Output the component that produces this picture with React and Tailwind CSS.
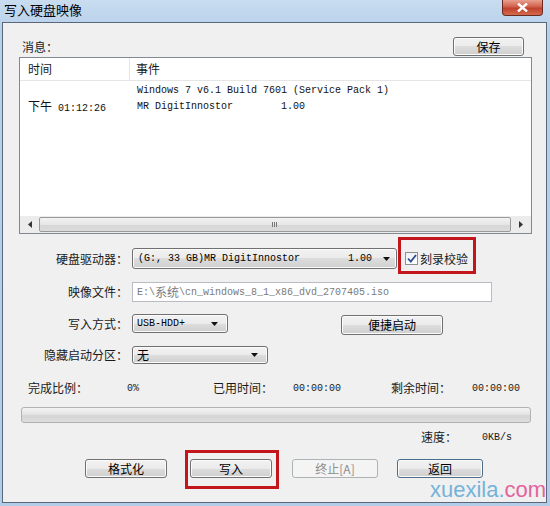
const CJK = "font-['Noto_Sans_CJK_SC',sans-serif]";
const MONO = "font-['Liberation_Mono','Noto_Sans_CJK_SC',monospace]";
const FACE =
  "flex items-center rounded-[3px] bg-[linear-gradient(#f2f2f2,#ebebeb_50%,#dddddd_50%,#cfcfcf)] shadow-[inset_0_0_0_1px_#fbfbfb] text-[12px] text-black";
const BTN = `${FACE} justify-center border border-[#707070]`;
const COMBO = `${FACE} justify-between border border-[#707070]`;

function Arrow() {
  return (
    <svg width="7" height="4" viewBox="0 0 7 4">
      <path d="M0 0h7L3.5 4z" fill="#111" />
    </svg>
  );
}

function Label({ children }) {
  return (
    <div className={`w-[125px] shrink-0 text-right text-[12px] text-[#1a1a1a] ${CJK}`}>
      {children}
    </div>
  );
}

export default function App() {
  return (
    <div className="relative w-[550px] h-[506px] overflow-hidden bg-[linear-gradient(#c9dcf0,#b7d0ea_30px,#b3cde9)]">
      {/* title bar */}
      <div className="flex items-start h-[22px]">
        <div className={`pl-[4px] pt-[1px] text-[13px] leading-[18px] text-black ${CJK}`}>写入硬盘映像</div>
        <div className="ml-auto mr-[7px] w-[41px] h-[16px] rounded-b-[4px] border border-t-0 border-[#6b2a22] bg-[linear-gradient(#e9a08f,#d0604b_45%,#c0402c_55%,#d46a4a)] flex items-center justify-center">
          <svg width="11" height="9" viewBox="0 0 11 9">
            <path d="M1 0.5L10 8.5M10 0.5L1 8.5" stroke="#fff" strokeWidth="2.4" />
          </svg>
        </div>
      </div>

      {/* client area */}
      <div className="ml-[2px] w-[545px] h-[481px] border border-[#58677a] bg-[#f0f0f0] flex flex-col">
        {/* messages header */}
        <div className="mt-[14px] h-[19px] flex items-center pl-[19px] pr-[22px]">
          <span className={`text-[12px] text-[#1a1a1a] ${CJK}`}>消息：</span>
          <button className={`${BTN} ml-auto w-[71px] h-[19px] ${CJK}`}>保存</button>
        </div>

        {/* list view */}
        <div className="mt-[1px] ml-[16px] w-[513px] h-[177px] border border-[#828790] bg-white flex flex-col">
          <div className={`h-[23px] shrink-0 flex items-center border-b border-[#e5e5e5] text-[12px] text-[#1a1a1a] ${CJK}`}>
            <div className="w-[110px] pl-[8px] border-r border-[#e5e5e5] h-full flex items-center">时间</div>
            <div className="pl-[6px]">事件</div>
          </div>
          <div className="pt-[1px] flex flex-col text-[10px] text-[#111]">
            <div className="h-[16px] flex items-center">
              <div className="w-[111px]" />
              <div className={`pl-[6px] whitespace-pre ${MONO}`}>Windows 7 v6.1 Build 7601 (Service Pack 1)</div>
            </div>
            <div className="h-[16px] flex items-center">
              <div className={`w-[111px] pl-[8px] whitespace-pre ${MONO}`}>
                <span className={`text-[12px] ${CJK}`}>下午</span> 01:12:26
              </div>
              <div className={`pl-[6px] whitespace-pre ${MONO}`}>MR DigitInnostor        1.00</div>
            </div>
          </div>
          <div className="mt-auto h-[17px] flex items-center bg-[#ececec] px-[1px]">
            <div className="w-[18px] h-[15px] flex items-center justify-center">
              <svg width="4" height="7" viewBox="0 0 4 7"><path d="M4 0v7L0 3.5z" fill="#333" /></svg>
            </div>
            <div className="flex-1 h-[15px] rounded-[2px] border border-[#9a9a9a] bg-[linear-gradient(#f3f3f3,#e6e6e6_50%,#d6d6d6_50%,#dcdcdc)] flex items-center justify-center">
              <svg width="6" height="7" viewBox="0 0 6 7"><path d="M0.5 1v5M2.5 1v5M4.5 1v5" stroke="#777" /></svg>
            </div>
            <div className="w-[19px] h-[15px] flex items-center justify-center">
              <svg width="4" height="7" viewBox="0 0 4 7"><path d="M0 0v7L4 3.5z" fill="#333" /></svg>
            </div>
          </div>
        </div>

        {/* drive */}
        <div className="mt-[14px] h-[21px] flex items-center">
          <Label>硬盘驱动器：</Label>
          <div className={`${COMBO} ml-[4px] w-[265px] h-[21px] pl-[5px] pr-[6px]`}>
            <span className={`text-[10px] whitespace-pre ${MONO}`}>(G:, 33 GB)MR DigitInnostor        1.00</span>
            <Arrow />
          </div>
          <div className="ml-[8px] flex items-center">
            <div className="w-[13px] h-[13px] border border-[#8e8f8f] bg-[linear-gradient(#eef1f5,#ffffff)] flex items-center justify-center">
              <svg width="10" height="9" viewBox="0 0 10 9">
                <path d="M1 4.5L3.8 7.5L9 1" stroke="#2c4d8f" strokeWidth="1.8" fill="none" />
              </svg>
            </div>
            <span className={`ml-[2px] text-[12px] text-[#1a1a1a] ${CJK}`}>刻录校验</span>
          </div>
        </div>

        {/* image file */}
        <div className="mt-[13px] h-[20px] flex items-center">
          <Label>映像文件：</Label>
          <div className={`ml-[4px] w-[360px] h-[20px] border border-[#b9bcc2] bg-white flex items-center pl-[4px] text-[10px] text-[#7a7a7a] whitespace-pre ${MONO}`}>
            E:\<span className={`text-[12px] ${CJK}`}>系统</span>\cn_windows_8_1_x86_dvd_2707405.iso
          </div>
        </div>

        {/* write mode */}
        <div className="mt-[12px] h-[21px] flex items-start">
          <div className="h-[19px] flex items-center">
            <Label>写入方式：</Label>
          </div>
          <div className={`${COMBO} ml-[4px] w-[96px] h-[19px] pl-[4px] pr-[9px]`}>
            <span className={`text-[10px] ${MONO}`}>USB-HDD+</span>
            <Arrow />
          </div>
          <button className={`${BTN} ml-[113px] mt-[1px] w-[102px] h-[20px] ${CJK}`}>便捷启动</button>
        </div>

        {/* hidden partition */}
        <div className="mt-[11px] h-[18px] flex items-center">
          <Label>隐藏启动分区：</Label>
          <div className={`${COMBO} ml-[4px] w-[136px] h-[18px] pl-[4px] pr-[9px]`}>
            <span className={`text-[12px] ${CJK}`}>无</span>
            <Arrow />
          </div>
        </div>

        {/* progress info */}
        <div className="mt-[16px] h-[16px] flex items-center pl-[25px] text-[12px] text-[#1a1a1a]">
          <span className={`w-[99px] ${CJK}`}>完成比例：</span>
          <span className={`w-[86px] text-[10px] ${MONO}`}>0%</span>
          <span className={`w-[80px] ${CJK}`}>已用时间：</span>
          <span className={`w-[98px] text-[10px] ${MONO}`}>00:00:00</span>
          <span className={`w-[81px] ${CJK}`}>剩余时间：</span>
          <span className={`text-[10px] ${MONO}`}>00:00:00</span>
        </div>

        <div className="mt-[11px] ml-[18px] w-[510px] h-[16px] rounded-[3px] border border-[#b2b2b2] bg-[linear-gradient(#f3f3f3,#e4e4e4_45%,#d4d4d4_55%,#dedede)]" />

        <div className="mt-[6px] h-[16px] flex items-center pl-[418px] text-[12px] text-[#1a1a1a]">
          <span className={`w-[61px] ${CJK}`}>速度：</span>
          <span className={`text-[10px] ${MONO}`}>0KB/s</span>
        </div>

        {/* buttons */}
        <div className={`mt-[14px] h-[19px] flex items-center ${CJK}`}>
          <button className={`${BTN} ml-[82px] w-[82px] h-[19px]`}>格式化</button>
          <button className={`${BTN} ml-[23px] w-[82px] h-[19px]`}>写入</button>
          <button className="ml-[20px] w-[86px] h-[19px] flex items-center justify-center border border-[#adb2b5] rounded-[3px] bg-[#f4f4f4] text-[12px] text-[#8d8d8d]">
            终止[A]
          </button>
          <button className={`${FACE} justify-center border border-[#4d6d8a] ml-[19px] w-[86px] h-[19px]`}>返回</button>
        </div>
      </div>

      {/* annotation boxes */}
      <div className="absolute left-[398px] top-[237px] w-[78px] h-[37px] border-[3px] border-[#c3161c]" />
      <div className="absolute left-[185px] top-[450px] w-[94px] h-[39px] border-[3px] border-[#c3161c]" />

      {/* watermark */}
      <div className="absolute left-[430px] top-[479px] text-[22px] leading-[22px] font-['Liberation_Sans',sans-serif]">
        <span className="text-[#74b3d9]">xuexila.</span>
        <span className="text-[#e3649c]">com</span>
      </div>
    </div>
  );
}
